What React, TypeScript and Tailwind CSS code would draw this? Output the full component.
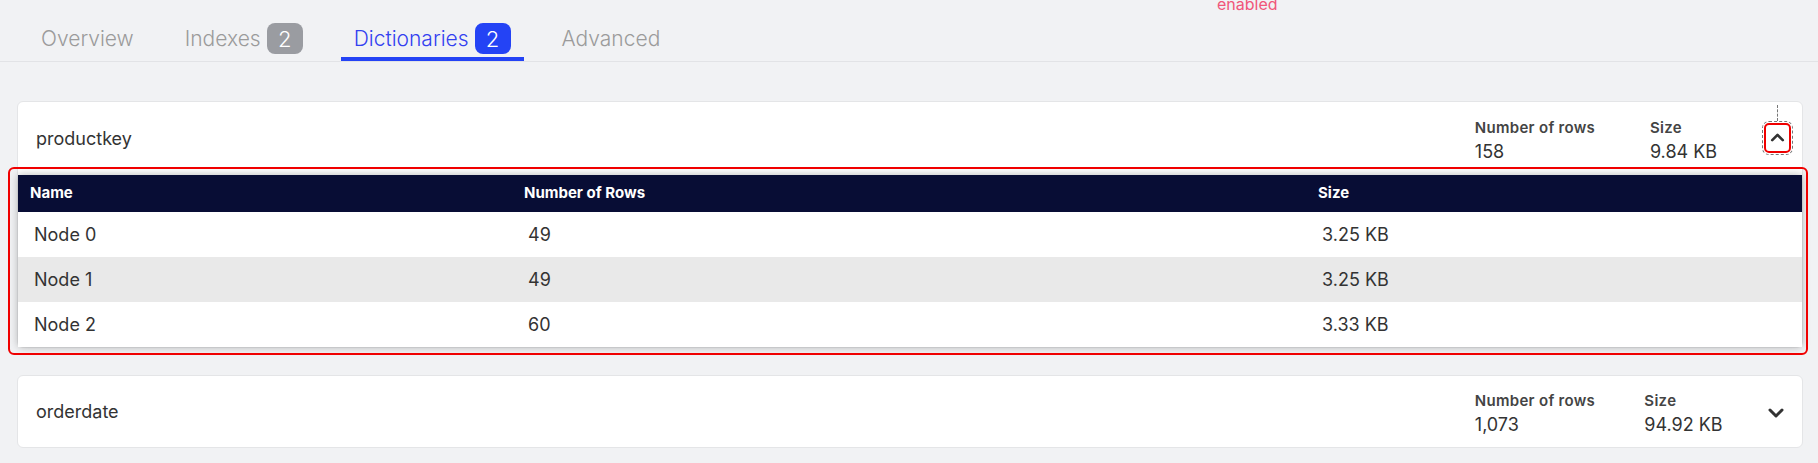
import React from "react";
import { ChevronDown, ChevronUp } from "lucide-react";

const rows = [
  { name: "Node 0", count: "49", size: "3.25 KB" },
  { name: "Node 1", count: "49", size: "3.25 KB" },
  { name: "Node 2", count: "60", size: "3.33 KB" },
];

function Tab({ label, badge, active }: { label: string; badge?: string; active?: boolean }) {
  return (
    <div
      className={
        "flex items-center gap-[6px] h-[41px] px-[13px] border-b-4 " +
        (active ? "border-[#2443f5] text-[#3340f0]" : "border-transparent text-[#9b9b9b]")
      }
    >
      <span className="text-[21px] font-light leading-none">{label}</span>
      {badge && (
        <span
          className={
            "flex items-center justify-center w-[36px] h-[31px] rounded-[8px] text-white text-[22px] font-light leading-none " +
            (active ? "bg-[#2443f5]" : "bg-[#9a9ca1]")
          }
        >
          {badge}
        </span>
      )}
    </div>
  );
}

function Stats({ count, size, open }: { count: string; size: string; open?: boolean }) {
  return (
    <div className="flex items-stretch">
      <div className="w-[160px] flex justify-center items-center">
        <div className="flex flex-col pt-[4px]">
          <span className="text-[15px] font-semibold leading-[20px] text-[#444] tracking-[0.3px]">Number of rows</span>
          <span className="text-[18px] leading-[24px] mt-[2px] text-[#333]">{count}</span>
        </div>
      </div>
      <div className="w-[137px] flex justify-center items-center">
        <div className="flex flex-col pt-[4px]">
          <span className="text-[15px] font-semibold leading-[20px] text-[#444] tracking-[0.3px]">Size</span>
          <span className="text-[18px] leading-[24px] mt-[2px] text-[#333]">{size}</span>
        </div>
      </div>
      <div className="w-[50px] flex justify-center items-center">
        {open ? (
          <div className="relative mb-[2px]">
            <div className="absolute bottom-full left-1/2 mb-[2px] h-[16px] border-l border-dashed border-[#777]" />
            <div className="flex items-center justify-center w-[27px] h-[30px] border-2 border-[#f00000] rounded-[5px] outline-1 outline-dashed outline-[#777] outline-offset-1">
              <ChevronUp size={21} strokeWidth={3} className="text-[#333]" />
            </div>
          </div>
        ) : (
          <ChevronDown size={24} strokeWidth={3} className="text-[#333] mr-[3px] mt-[2px]" />
        )}
      </div>
    </div>
  );
}

export default function App() {
  return (
    <div className="relative min-h-screen bg-[#f1f2f4] font-['Inter','Noto_Sans',sans-serif]">
      <span className="absolute left-[1217px] top-[-4px] text-[16px] leading-none text-[#f0577a]">enabled</span>
      <nav className="flex gap-[25px] px-[28px] pt-[20px] border-b border-[#e2e3e6]">
        <Tab label="Overview" />
        <Tab label="Indexes" badge="2" />
        <Tab label="Dictionaries" badge="2" active />
        <Tab label="Advanced" />
      </nav>

      <div className="flex flex-col pl-[17px] pr-[15px] pt-[39px]">
        <div className="bg-white border border-[#e4e5e7] rounded-[6px]">
          <div className="flex items-center h-[73px]">
            <div className="flex-1 pl-[18px] text-[18px] text-[#333]">productkey</div>
            <Stats count="158" size="9.84 KB" open />
          </div>
          <div className="relative">
            <div className="relative bg-white shadow-[0_0_8px_rgba(0,0,0,0.28)] rounded-b-[4px]">
              <div className="grid grid-cols-[494px_794px_1fr] h-[37px] items-center bg-[#080d35] text-white text-[15px] font-bold">
                <div className="pl-[12px]">Name</div>
                <div className="pl-[12px]">Number of Rows</div>
                <div className="pl-[12px]">Size</div>
              </div>
              {rows.map((r, i) => (
                <div
                  key={r.name}
                  className={
                    "grid grid-cols-[494px_794px_1fr] h-[45px] items-center text-[18px] text-[#333] " +
                    (i === 1 ? "bg-[#e9e9e9]" : "bg-white")
                  }
                >
                  <div className="pl-[16px]">{r.name}</div>
                  <div className="pl-[16px]">{r.count}</div>
                  <div className="pl-[16px]">{r.size}</div>
                </div>
              ))}
            </div>
            <div className="pointer-events-none absolute -left-[10px] -right-[6px] -top-[8px] -bottom-[8px] border-2 border-[#f00000] rounded-[6px]" />
          </div>
        </div>

        <div className="mt-[27px] bg-white border border-[#e4e5e7] rounded-[6px]">
          <div className="flex items-center h-[71px]">
            <div className="flex-1 pl-[18px] text-[18px] text-[#333]">orderdate</div>
            <Stats count="1,073" size="94.92 KB" />
          </div>
        </div>
      </div>
    </div>
  );
}
